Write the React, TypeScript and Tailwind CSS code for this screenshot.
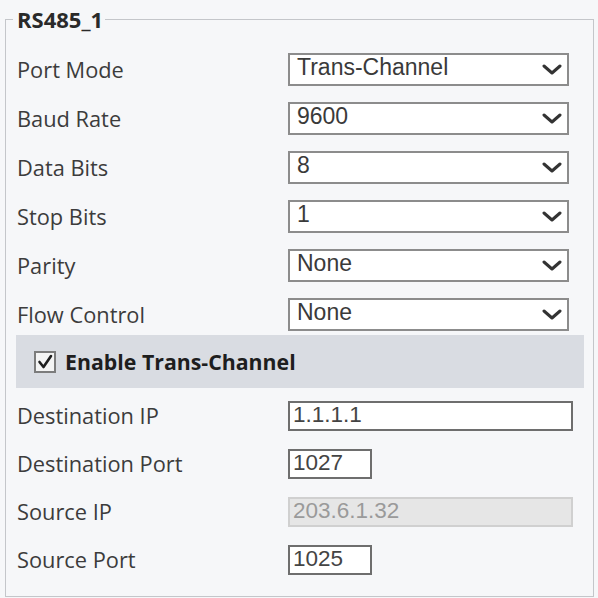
import React from "react";

const sans = { fontFamily: '"Open Sans", "Noto Sans", sans-serif' };
const arial = { fontFamily: '"Liberation Sans", Arial, sans-serif' };

function Chevron() {
  return (
    <svg width="20" height="11" viewBox="0 0 20 11" className="shrink-0">
      <path d="M2 2 L10 9 L18 2" fill="none" stroke="#333" strokeWidth="3" strokeLinecap="round" strokeLinejoin="round" />
    </svg>
  );
}

function SelectBox({ value }: { value: string }) {
  return (
    <div className="flex h-[33px] w-[281px] items-center justify-between border-2 border-[#8c8c8c] bg-white pl-[7px] pr-[5px]">
      <span className="text-[23px] leading-none text-[#3a3a3a] -mt-[4px]" style={arial}>{value}</span>
      <Chevron />
    </div>
  );
}

function TextBox({ value, wide, disabled }: { value: string; wide?: boolean; disabled?: boolean }) {
  return (
    <div
      className={
        "flex h-[30px] items-center border-2 pl-[3px] " +
        (wide ? "w-[285px] " : "w-[84px] ") +
        (disabled ? "border-[#d0d0d0] bg-[#e6e6e6] text-[#9a9a9a]" : "border-[#6e6e6e] bg-white text-[#444]")
      }
    >
      <span className="text-[22.5px] leading-none -mt-[2px]" style={arial}>{value}</span>
    </div>
  );
}

function Row({ label, children, h }: { label: string; children: React.ReactNode; h: string }) {
  return (
    <div className={"flex items-center pl-[1px] " + h}>
      <div className="w-[271px] text-[21.8px] leading-none text-[#3c3c3c]" style={sans}>{label}</div>
      {children}
    </div>
  );
}

export default function App() {
  return (
    <div className="h-[598px] w-[598px] overflow-hidden bg-[#f6f7f9] pt-[7px] pl-[5px]">
      <fieldset className="h-[590px] w-[589px] border border-[#c4c6ca] pl-[7px]">
        <legend className="pl-[4px] pr-[2px] text-[22px] font-bold leading-[24px] text-[#2a2a2a]" style={sans}>RS485_1</legend>
        <div className="-ml-[7px] flex flex-col pl-[10px] pr-[9px] pt-[22px]">
          <div className="flex flex-col gap-[16px]">
            <Row label="Port Mode" h="h-[33px]"><SelectBox value="Trans-Channel" /></Row>
            <Row label="Baud Rate" h="h-[33px]"><SelectBox value="9600" /></Row>
            <Row label="Data Bits" h="h-[33px]"><SelectBox value="8" /></Row>
            <Row label="Stop Bits" h="h-[33px]"><SelectBox value="1" /></Row>
            <Row label="Parity" h="h-[33px]"><SelectBox value="None" /></Row>
            <Row label="Flow Control" h="h-[33px]"><SelectBox value="None" /></Row>
          </div>
          <div className="mt-[4px] flex h-[53px] items-center bg-[#d9dce2] pl-[18px]">
            <div className="flex h-[22px] w-[22px] items-center justify-center border-2 border-[#7c7c7c] bg-[#f4f4f4]">
              <svg width="16" height="16" viewBox="0 0 16 16">
                <path d="M2.5 8 L6.5 13 L14 2" fill="none" stroke="#1e1e1e" strokeWidth="2.6" strokeLinecap="round" strokeLinejoin="round" />
              </svg>
            </div>
            <span className="ml-[9px] text-[21.3px] font-bold leading-none text-[#1e1e1e]" style={sans}>Enable Trans-Channel</span>
          </div>
          <div className="mt-[13px] flex flex-col gap-[18px]">
            <Row label="Destination IP" h="h-[30px]"><TextBox value="1.1.1.1" wide /></Row>
            <Row label="Destination Port" h="h-[30px]"><TextBox value="1027" /></Row>
            <Row label="Source IP" h="h-[30px]"><TextBox value="203.6.1.32" wide disabled /></Row>
            <Row label="Source Port" h="h-[30px]"><TextBox value="1025" /></Row>
          </div>
        </div>
      </fieldset>
    </div>
  );
}
